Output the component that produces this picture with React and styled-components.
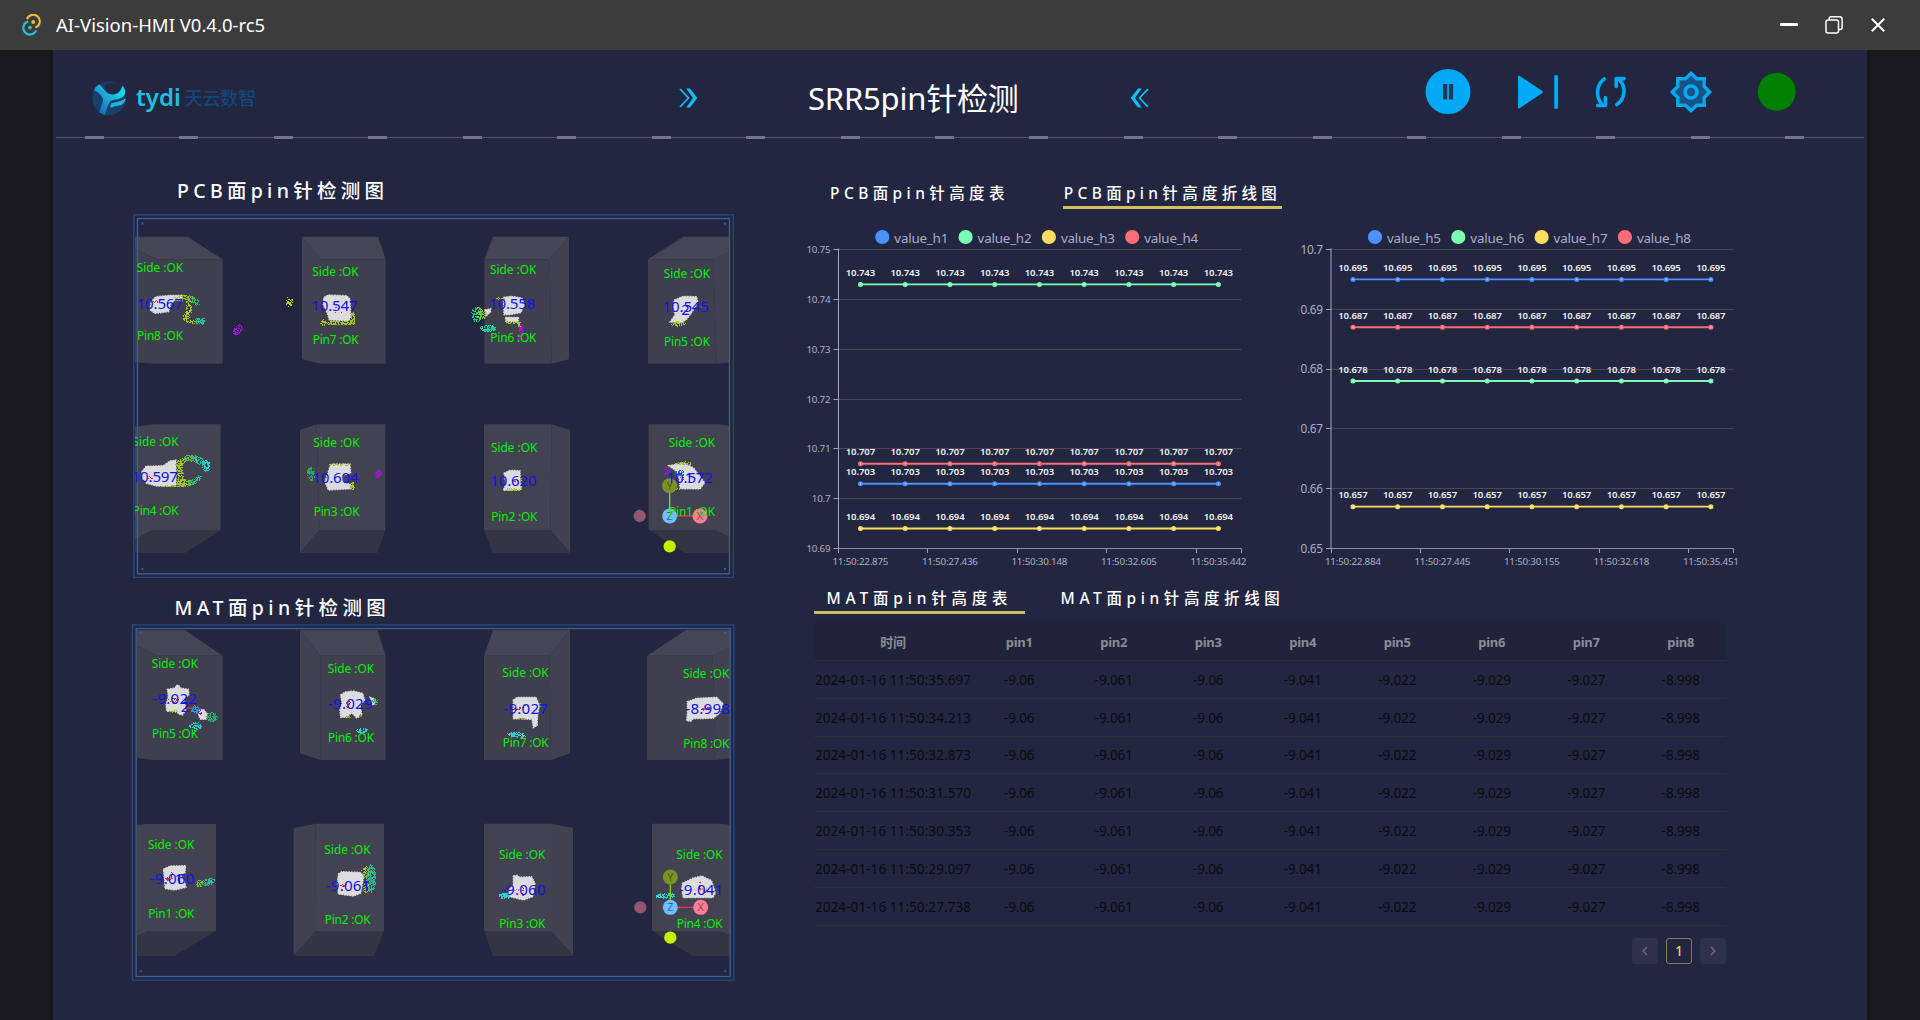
import React from "react";
import styled, { createGlobalStyle } from "styled-components";

const SANS = `"Noto Sans", "Noto Sans CJK SC", sans-serif`;

const GlobalStyle = createGlobalStyle`
  * { box-sizing: border-box; }
  body { margin: 0; background: #18171c; font-family: ${SANS}; overflow: hidden; }
  svg { display: block; flex: none; }
  svg text { font-family: ${SANS}; }
`;

/* ---------- window frame ---------- */

const Window = styled.div`
  width: 1920px;
  height: 1020px;
  display: flex;
  flex-direction: column;
`;

const TitleBar = styled.div`
  height: 50px;
  flex: none;
  display: flex;
  align-items: center;
  padding: 0 34px 0 22px;
  background: #3c3c3c;
  color: #fff;
`;

const AppName = styled.span`
  margin: 0 auto 0 14px;
  font-size: 18.5px;
  line-height: 50px;
  letter-spacing: 0;
  white-space: nowrap;
`;

const WindowButtons = styled.div`
  display: flex;
  align-items: center;
  gap: 27px;
`;

const Body = styled.div`
  flex: 1;
  display: flex;
  justify-content: center;
  background: #18171c;
`;

const Main = styled.main`
  width: 1814px;
  background: #232640;
  color: #fff;
`;

/* ---------- header ---------- */

const Header = styled.header`
  height: 86px;
  padding: 10px 0 0 39px;
  display: grid;
  grid-template-columns: 587px 129px 322px 295px auto;
  align-items: center;
`;

const Logo = styled.div`
  display: flex;
  align-items: center;
`;

const LogoLatin = styled.span`
  margin: -3px 0 0 9px;
  font-size: 24px;
  line-height: 30px;
  font-weight: 600;
  letter-spacing: 0;
  color: #22bfdc;
`;

const LogoHan = styled.span`
  margin-left: 4px;
  font-size: 18px;
  font-weight: 500;
  line-height: 30px;
  letter-spacing: -0.2px;
  color: #13477a;
`;

const PageTitle = styled.h1`
  margin: 0;
  font-size: 31px;
  font-weight: 400;
  line-height: 44px;
  letter-spacing: -0.2px;
  white-space: nowrap;
`;

const Actions = styled.div`
  display: flex;
  align-items: center;
  margin-top: -13px;
`;

const ActionButton = styled.button`
  width: 46px;
  height: 46px;
  padding: 0;
  border: 0;
  background: none;
  margin-left: ${(p) => p.$gap || 0}px;
`;

const Divider = styled.div`
  height: 3px;
  margin: 0 3px;
  background:
    repeating-linear-gradient(90deg, #757489 0 19px, transparent 19px 94.45px) 28.5px 0 / 100% 3px no-repeat,
    linear-gradient(#56566e, #56566e) 0 1px / 100% 1px no-repeat;
`;

/* ---------- content ---------- */

const Content = styled.div`
  display: flex;
  padding-left: 78px;
`;

const LeftColumn = styled.section`
  width: 667px;
`;

const RightColumn = styled.section`
  width: 945px;
`;

const PanelTitle = styled.h2`
  height: ${(p) => p.$height}px;
  margin: 0;
  padding: ${(p) => p.$top}px 0 0 ${(p) => p.$left}px;
  font-size: 19.5px;
  font-weight: 500;
  line-height: 24px;
  letter-spacing: ${(p) => p.$spacing}px;
  white-space: nowrap;
`;

const ScenePanel = styled.div`
  margin-left: ${(p) => p.$left}px;
`;

const Tabs = styled.div`
  display: flex;
  gap: 38px;
  padding: ${(p) => p.$top}px 0 0 16px;
`;

const Tab = styled.div`
  width: ${(p) => p.$width}px;
  height: 27px;
  display: flex;
  justify-content: center;
  font-size: 15.5px;
  font-weight: 500;
  line-height: 23.5px;
  letter-spacing: ${(p) => p.$spacing}px;
  white-space: nowrap;
  border-bottom: 3px solid ${(p) => (p.$active ? "#d3be60" : "transparent")};
`;

const ChartRow = styled.div`
  display: flex;
`;

const Table = styled.div`
  width: 912px;
  margin: 9px 0 0 16px;
  overflow: hidden;
`;

const Row = styled.div`
  display: grid;
  grid-template-columns: 158px repeat(8, 94.5px);
  height: 37.8px;
  border-bottom: 1px solid #2f2e3a;
  align-items: center;
  text-align: center;
  font-size: 13.6px;
  letter-spacing: -0.2px;
  white-space: nowrap;
  color: #0a0a10;
`;

const HeadRow = styled(Row)`
  height: 38px;
  background: #20233a;
  color: #8b8d96;
  font-size: 13px;
  font-weight: 700;
`;

const Cell = styled.span`
  display: block;
`;

const TimeCell = styled(Cell)`
  letter-spacing: 0.03px;
`;

const Pager = styled.div`
  display: flex;
  justify-content: flex-end;
  gap: 8px;
  margin: 12px 17px 0 0;
`;

const PageButton = styled.button`
  width: 26px;
  height: 26px;
  padding: 0;
  display: flex;
  align-items: center;
  justify-content: center;
  border: 1px solid ${(p) => (p.$active ? "#8b7d50" : "#2f304b")};
  border-radius: 3px;
  background: ${(p) => (p.$active ? "transparent" : "#2f304b")};
  color: ${(p) => (p.$active ? "#e6cc66" : "#6a6b80")};
  font: 500 14px/24px ${SANS};
`;

/* ---------- icons ---------- */

const AppIcon = () => (
  <svg width="20" height="22" viewBox="0 0 20 22" fill="none">
    <path d="M5 5.2 A6.6 6.6 0 1 1 13.4 13.6" stroke="#f5b82e" strokeWidth="2.1" />
    <path d="M6.2 7.6 A6.6 6.6 0 1 0 14 16.6" stroke="#26c3d6" strokeWidth="2.1" />
    <circle cx="11.2" cy="8" r="1.9" fill="#f5b82e" />
    <circle cx="8" cy="13.6" r="1.9" fill="#26c3d6" />
  </svg>
);

const MinimizeIcon = () => (
  <svg width="18" height="20" viewBox="0 0 18 20">
    <rect x="0" y="8" width="18" height="3" rx="1" fill="#fff" />
  </svg>
);

const RestoreIcon = () => (
  <svg width="18" height="18" viewBox="0 0 18 18" fill="none" stroke="#fff" strokeWidth="1.5">
    <rect x="1" y="4" width="12.5" height="13" rx="2" />
    <path d="M4.2 4 V2.8 a2 2 0 0 1 2-2 H14.6 a2.5 2.5 0 0 1 2.5 2.5 V11.5 a2 2 0 0 1-2 2 H13.6" />
  </svg>
);

const CloseIcon = () => (
  <svg width="16" height="16" viewBox="0 0 16 16" stroke="#fff" strokeWidth="2">
    <path d="M1.8 1.8 L14.2 14.2 M14.2 1.8 L1.8 14.2" />
  </svg>
);

const LogoMark = () => (
  <svg width="35" height="35" viewBox="0 0 35 35">
    <defs>
      <linearGradient id="mark" x1="0" y1="1" x2="1" y2="0.1">
        <stop offset="0.1" stopColor="#1467b4" />
        <stop offset="0.5" stopColor="#1fa4d6" />
        <stop offset="0.85" stopColor="#12dcec" />
      </linearGradient>
    </defs>
    <circle cx="17" cy="17.4" r="16.8" fill="#15406f" />
    <path d="M12.5 4.5 C17 0.5 26 1.5 29 6 C29 11 24 14.5 19.5 13.5 C15.5 12 13 8 12.5 4.5Z" fill="#222844" />
    <path
      d="M3.2 6.5 L7.2 3.2 C10 5.6 12.5 9.5 16 12.6 C21 15 29 13 30.2 4.4 C34 8.5 34.4 13 30.4 16.2 C26 18.6 21 18.6 18.5 20 C15.5 24 14.4 29 12.8 34 L7 31.4 C9 27 10.6 22.5 11.2 18.6 C9.4 14 6 11 2 9.6 Z"
      fill="url(#mark)"
    />
    <path d="M18.6 22.2 C23 20.4 29 20.6 33.8 16.4 C34.6 20.5 31 24.4 26.6 25.2 C23 25.6 20.6 26 18 27.6 C18 25.6 18 23.6 18.6 22.2Z" fill="#1fb4dc" stroke="#232640" strokeWidth="0.7" />
  </svg>
);

const DoubleChevron = ({ flip }) => (
  <svg width="19" height="20" viewBox="0 0 19 20" fill="none" stroke="#12bdf8">
    <g transform={flip ? "translate(19 0) scale(-1 1)" : undefined}>
      <path d="M1 1 L9.5 10 L1 19" strokeWidth="1.8" />
      <path d="M7.2 0.5 H11 L18.3 10 L11 19.5 H7.2 L14 10 Z" fill="#12bdf8" stroke="none" />
    </g>
  </svg>
);

const PauseIcon = () => (
  <svg width="46" height="46" viewBox="0 0 46 46">
    <circle cx="23" cy="22.6" r="22.5" fill="#03a9f4" />
    <rect x="18" y="15" width="4.2" height="15.4" fill="#1c3a5c" />
    <rect x="23.9" y="15" width="4.2" height="15.4" fill="#1c3a5c" />
  </svg>
);

const StepIcon = () => (
  <svg width="46" height="46" viewBox="0 0 46 46" fill="#03a9f4">
    <path d="M3 7.5 Q3 6 4.4 6.8 L27.4 22 Q28.4 23 27.4 24 L4.4 39.4 Q3 40 3 38.6 Z" />
    <rect x="39.2" y="6.2" width="3.8" height="33.5" />
  </svg>
);

const CycleIcon = () => (
  <svg width="46" height="46" viewBox="0 0 46 46" fill="none" stroke="#03a9f4" strokeWidth="3.6" strokeLinecap="round" strokeLinejoin="round">
    <path d="M16.2 10 C8.6 15.5 7.2 27 13.6 35" />
    <path d="M9.6 36.5 H17.4 V28.6" />
    <path d="M28.8 35.6 C37 30 38.6 18.6 31.6 11" />
    <path d="M36 9.6 H28.2 V17.6" />
  </svg>
);

const GearIcon = () => (
  <svg width="46" height="46" viewBox="0 0 46 46" stroke="#03a9f4" strokeWidth="3.4">
    <path
      d="M23 4.3 L28.6 9.8 H36.2 V17.4 L41.7 23 L36.2 28.6 V36.2 H28.6 L23 41.7 L17.4 36.2 H9.8 V28.6 L4.3 23 L9.8 17.4 V9.8 H17.4 Z"
      fill="#1a517f"
    />
    <circle cx="23" cy="23" r="6" fill="#1a517f" strokeWidth="3.6" />
  </svg>
);

const StatusLight = () => (
  <svg width="46" height="46" viewBox="0 0 46 46">
    <circle cx="22.7" cy="22.7" r="19" fill="#008000" />
  </svg>
);

/* ---------- point-cloud scenes (3 drawing units per pixel) ---------- */

const FACE = { top: "#454555", front: "#3f3f4e", side: "#414150", lit: "#424251", under: "#343443" };

const random = (seed) => {
  let s = seed | 0;
  return () => {
    s = (s + 0x6d2b79f5) | 0;
    let t = Math.imul(s ^ (s >>> 15), 1 | s);
    t = (t + Math.imul(t ^ (t >>> 7), 61 | t)) ^ t;
    return ((t ^ (t >>> 14)) >>> 0) / 4294967296;
  };
};

// Scattered dots inside a skewed ellipse.
const Speckle = ({ at: [cx, cy, rx, ry, n, color, tilt = 0] }) => {
  const rnd = random(Math.round(cx * 31 + cy * 17 + n));
  let d = "";
  for (let i = 0; i < n; i++) {
    const a = rnd() * Math.PI * 2;
    const r = Math.sqrt(rnd());
    const x = Math.cos(a) * r * rx;
    const y = Math.sin(a) * r * ry + x * tilt;
    d += `M${Math.round((cx + x) / 3) * 3} ${Math.round((cy + y) / 3) * 3}h3v3h-3z`;
  }
  return <path d={d} fill={color} />;
};

const LIME = "#a3c520";
const GREEN = "#38b85c";
const TEAL = "#24bfa4";
const CYAN = "#27d0d2";
const VIOLET = "#a514d8";
const RED = "#e02828";

const pcbScene = {
  view: "39 42 1803 1092",
  width: 601,
  height: 364,
  outer: [41.5, 44.5, 1799, 1088],
  inner: [52.5, 55.5, 1776, 1066],
  clip: [45, 55, 1783, 1066],
  dots: [[67, 71], [1815, 71], [67, 1107], [1815, 1107]],
  faces: [
    ["top", "45,110 203,110 308,178 112,178 45,147"],
    ["front", "45,147 112,178 308,178 308,491 100,491 45,487"],
    ["top", "546,110 774,110 797,178 600,178"],
    ["side", "546,110 600,178 600,491 546,478"],
    ["front", "600,178 797,178 797,491 600,491"],
    ["top", "1119,110 1347,110 1289,178 1093,178"],
    ["front", "1093,178 1289,178 1295,491 1093,491"],
    ["side", "1289,178 1347,110 1347,478 1295,491"],
    ["top", "1690,110 1830,110 1830,155 1780,178 1584,178"],
    ["front", "1584,178 1780,178 1790,491 1584,491"],
    ["side", "1780,178 1830,155 1830,488 1790,491"],
    ["lit", "45,680 100,673 302,673 302,990 100,990 45,1018"],
    ["under", "100,990 302,990 195,1059 45,1059 45,1018"],
    ["side", "540,690 590,673 598,990 540,1059"],
    ["lit", "590,673 796,673 796,990 598,990"],
    ["under", "598,990 796,990 772,1059 540,1059"],
    ["lit", "1092,673 1295,673 1291,990 1092,990"],
    ["side", "1295,673 1350,690 1350,1059 1291,990"],
    ["under", "1092,990 1291,990 1350,1059 1119,1059"],
    ["lit", "1586,673 1800,673 1830,679 1830,1012 1785,990 1586,990"],
    ["under", "1586,990 1785,990 1830,1012 1830,1059 1696,1059"],
  ],
  blobs: [
    "98,300 108,290 150,286 186,286 186,302 165,300 152,312 146,335 105,340 90,330 92,312",
    "612,292 625,285 680,287 690,297 692,350 686,362 628,360 622,340 609,312",
    "1150,292 1175,289 1205,294 1214,315 1202,338 1170,344 1152,344",
    "1156,352 1196,352 1194,366 1158,364",
    "1095,330 1112,326 1112,336 1100,346",
    "1663,300 1690,289 1730,290 1733,308 1720,330 1700,358 1685,368 1650,366 1665,345 1660,320",
    "66,815 78,799 130,797 150,783 168,780 168,858 110,858 80,850 66,835",
    "625,815 632,793 690,792 692,820 668,826 672,850 690,852 696,866 625,870 615,845",
    "1152,820 1170,811 1200,812 1202,868 1150,871 1158,850",
    "1646,797 1690,789 1720,803 1754,848 1740,867 1680,866 1678,835 1665,810",
  ],
  clouds: [
    [190, 291, 28, 6, 60, LIME], [218, 300, 20, 12, 55, GREEN, 0.4], [205, 320, 10, 22, 60, LIME],
    [197, 350, 10, 14, 50, LIME], [215, 364, 18, 5, 32, LIME], [239, 362, 15, 11, 60, TEAL],
    [506, 305, 10, 15, 36, "#c6cc18"], [352, 388, 15, 14, 70, VIOLET, -0.5],
    [607, 366, 9, 9, 24, LIME], [655, 368, 48, 6, 100, LIME], [697, 355, 8, 18, 55, LIME],
    [1070, 342, 18, 22, 130, "#12cf7c"], [1083, 342, 14, 14, 50, LIME], [1103, 384, 23, 10, 110, "#18cfa0"],
    [1140, 294, 14, 4, 20, LIME], [1177, 367, 22, 4, 30, LIME], [1196, 372, 5, 9, 20, LIME],
    [1201, 385, 6, 14, 38, VIOLET], [1196, 410, 6, 10, 30, VIOLET],
    [1673, 370, 22, 7, 60, LIME], [1735, 320, 10, 3, 6, RED],
    [178, 815, 11, 38, 130, LIME], [182, 785, 18, 10, 60, LIME, -0.4], [210, 773, 20, 10, 80, "#5cbc48"],
    [235, 780, 20, 12, 70, TEAL, 0.4], [258, 797, 12, 18, 70, CYAN], [190, 848, 24, 11, 100, LIME],
    [215, 846, 16, 9, 60, GREEN, -0.5], [234, 834, 10, 8, 28, TEAL, -0.6], [150, 857, 30, 2, 24, LIME],
    [572, 821, 12, 20, 100, "#22a95c"], [774, 820, 9, 11, 90, "#8c1fd0", -0.3],
    [660, 792, 34, 4, 30, LIME], [696, 857, 6, 12, 30, LIME],
    [1178, 868, 24, 4, 26, LIME], [1202, 850, 3, 20, 14, LIME],
    [1638, 811, 8, 13, 44, "#7a1fc0"], [1677, 818, 14, 10, 40, "#1c6fd0"], [1690, 789, 24, 5, 30, LIME], [1655, 866, 26, 3, 26, LIME],
    [105, 304, 8, 5, 7, RED], [90, 832, 8, 5, 6, RED], [655, 320, 20, 22, 6, RED], [1184, 845, 8, 8, 4, RED], [1685, 832, 5, 10, 9, RED],
  ],
  gizmo: [1649, 948],
  labels: [
    [51, 216, 420, "Pin8", 50, 328, "10.567"],
    [578, 228, 432, "Pin7", 574, 332, "10.547"],
    [1111, 222, 426, "Pin6", 1107, 327, "10.558"],
    [1632, 234, 438, "Pin5", 1628, 336, "10.545"],
    [38, 738, 945, "Pin4", 35, 846, "10.597"],
    [581, 741, 948, "Pin3", 577, 849, "10.604"],
    [1114, 756, 963, "Pin2", 1111, 858, "10.620"],
    [1647, 741, 948, "Pin1", 1640, 850, "10.572"],
  ],
  marks: [[1684, 345, "2"], [1694, 850, "1"]],
};

const matScene = {
  view: "33 72 1812 1071",
  width: 604,
  height: 357,
  outer: [37.5, 74.5, 1804, 1066],
  inner: [48.5, 85.5, 1782, 1044],
  clip: [51, 90, 1781, 1038],
  dots: [[62, 99], [1816, 99], [62, 1114], [1816, 1114]],
  faces: [
    ["top", "51,90 194,90 308,167 112,167 51,138"],
    ["front", "51,138 112,167 308,167 308,480 100,480 51,474"],
    ["top", "540,90 772,90 797,167 601,167"],
    ["side", "540,90 601,167 601,480 540,460"],
    ["front", "601,167 797,167 797,480 601,480"],
    ["top", "1119,90 1350,90 1289,167 1092,167"],
    ["front", "1092,167 1289,167 1293,480 1092,480"],
    ["side", "1289,167 1350,90 1350,460 1293,480"],
    ["top", "1698,90 1832,90 1832,141 1778,167 1581,167"],
    ["front", "1581,167 1778,167 1788,480 1581,480"],
    ["side", "1778,167 1832,141 1832,474 1788,480"],
    ["lit", "51,675 80,672 288,672 288,993 85,993 51,1008"],
    ["under", "85,993 288,993 163,1068 51,1068 51,1008"],
    ["side", "521,684 587,671 588,993 521,1068"],
    ["lit", "587,671 792,671 792,993 588,993"],
    ["under", "588,993 792,993 762,1068 521,1068"],
    ["lit", "1092,671 1293,671 1293,993 1092,993"],
    ["side", "1293,671 1359,684 1359,1068 1293,993"],
    ["under", "1092,993 1293,993 1359,1068 1119,1068"],
    ["lit", "1596,671 1805,671 1832,675 1832,1008 1798,993 1596,993"],
    ["under", "1596,993 1798,993 1832,1008 1832,1068 1718,1068"],
  ],
  blobs: [
    "142,268 165,264 170,256 177,256 180,264 205,268 207,285 192,295 198,330 187,345 176,342 170,334 140,334 138,315 145,290",
    "235,332 250,328 262,342 258,358 242,358 236,348",
    "662,285 675,276 700,273 728,280 734,300 720,315 726,345 710,354 695,338 680,352 662,352 660,330 666,310",
    "750,292 764,296 768,306 758,316",
    "1180,300 1192,292 1248,292 1258,315 1252,355 1252,376 1240,383 1236,358 1180,356",
    "1702,305 1730,295 1790,292 1810,312 1798,340 1780,355 1720,356 1713,364 1700,362 1702,340",
    "130,808 150,798 197,797 195,818 180,828 190,835 198,862 165,870 135,866 134,840",
    "655,822 665,815 720,817 732,826 722,880 700,888 655,882 652,850",
    "1180,828 1192,826 1198,832 1235,830 1245,850 1238,890 1210,900 1170,890 1166,870 1180,855",
    "1687,850 1720,834 1745,828 1775,842 1786,880 1778,893 1690,893 1685,870",
  ],
  clouds: [
    [225, 327, 14, 12, 70, "#1f9ad0"], [238, 333, 5, 12, 16, VIOLET], [274, 350, 17, 14, 90, "#26b070"], [225, 377, 18, 12, 60, CYAN],
    [160, 298, 16, 8, 26, RED], [205, 322, 12, 4, 16, RED], [160, 333, 14, 3, 10, LIME],
    [764, 304, 8, 10, 26, "#3cc45c"], [725, 391, 19, 7, 60, CYAN], [684, 312, 12, 10, 16, RED], [683, 350, 7, 4, 12, "#9a9628"], [720, 345, 5, 5, 9, "#9a9628"],
    [1190, 403, 28, 8, 90, CYAN, 0.1], [1206, 321, 22, 3, 18, RED, -0.3], [1205, 355, 10, 3, 10, "#9a9628"], [1259, 318, 3, 8, 10, GREEN],
    [1757, 325, 18, 4, 26, RED, -0.1],
    [238, 850, 12, 10, 38, "#86b830"], [263, 845, 19, 12, 80, TEAL, -0.3], [145, 836, 14, 5, 22, RED], [154, 825, 2, 12, 8, RED],
    [735, 815, 13, 16, 55, LIME], [752, 834, 14, 42, 260, "#26b88c"], [737, 862, 9, 16, 36, LIME], [670, 855, 12, 4, 16, RED],
    [1153, 886, 17, 9, 100, CYAN], [1196, 868, 28, 3, 16, "#e08080"], [1207, 868, 2, 20, 12, RED],
    [1636, 886, 30, 8, 110, CYAN], [1745, 868, 26, 3, 16, "#e08080"], [1755, 872, 8, 5, 12, RED], [1738, 855, 2, 14, 8, RED],
  ],
  gizmo: [1651, 922],
  labels: [
    [96, 204, 414, "Pin5", 97, 313, "-9.022"],
    [624, 219, 426, "Pin6", 624, 328, "-9.029"],
    [1148, 231, 441, "Pin7", 1150, 343, "-9.027"],
    [1690, 234, 444, "Pin8", 1696, 342, "-8.998"],
    [85, 747, 954, "Pin1", 89, 852, "-9.060"],
    [614, 762, 972, "Pin2", 617, 874, "-9.061"],
    [1138, 777, 984, "Pin3", 1143, 886, "-9.060"],
    [1670, 777, 984, "Pin4", 1676, 886, "-9.041"],
  ],
  marks: [[182, 337, "2"], [164, 852, "1"]],
};

const Axis = ({ cx, cy }) => (
  <g>
    <path d={`M${cx} ${cy}V${cy - 91}`} stroke="#86d80c" strokeWidth="4" />
    <path d={`M${cx} ${cy}H${cx + 91}`} stroke="#f0304e" strokeWidth="4" />
    <circle cx={cx - 90} cy={cy} r="18.5" fill="#92566f" />
    <circle cx={cx} cy={cy + 91} r="18.5" fill="#c3f000" />
    <circle cx={cx} cy={cy - 91} r="22.5" fill="#7d9126" />
    <circle cx={cx + 91} cy={cy} r="22.5" fill="#ff7d96" />
    <circle cx={cx} cy={cy} r="22.5" fill="#70c0ff" />
    <g fontSize="33" textAnchor="middle" fillOpacity="0.65">
      <text x={cx} y={cy - 79} fill="#2c3a08">Y</text>
      <text x={cx + 91} y={cy + 12} fill="#5c1a30">X</text>
      <text x={cx} y={cy + 12} fill="#123458">Z</text>
    </g>
  </g>
);

const Scene = ({ id, scene }) => {
  const box = ([x, y, width, height]) => ({ x, y, width, height });
  return (
    <svg width={scene.width} height={scene.height} viewBox={scene.view}>
      <clipPath id={id}>
        <rect {...box(scene.clip)} />
      </clipPath>
      <g clipPath={`url(#${id})`}>
        {scene.faces.map(([kind, points]) => (
          <polygon key={points} points={points} fill={FACE[kind]} />
        ))}
        {scene.blobs.map((points) => (
          <polygon key={points} points={points} fill="#dcdcdf" stroke="#dcdcdf" strokeWidth="4" strokeDasharray="5 3" />
        ))}
        {scene.clouds.map((c) => (
          <Speckle key={c.join()} at={c} />
        ))}
      </g>
      <rect {...box(scene.outer)} fill="none" stroke="#28477f" strokeWidth="4" />
      <rect {...box(scene.inner)} fill="none" stroke="#3a5f9a" strokeWidth="4" />
      {scene.dots.map(([x, y]) => (
        <circle key={`${x},${y}`} cx={x} cy={y} r="3.4" fill="#2c62ac" />
      ))}
      <Axis cx={scene.gizmo[0]} cy={scene.gizmo[1]} />
      <g clipPath={`url(#${id})`}>
        {scene.labels.map(([x, sideY, pinY, pin, valueX, valueY, value]) => (
          <g key={pin}>
            <text x={valueX} y={valueY} fontSize="45.5" textLength={value[0] === "-" ? 134 : 139} fill="#1111ee">
              {value}
            </text>
            <g fontSize="35.5" fill="#06f006">
              <text x={x - 1} y={sideY} textLength="139">Side :OK</text>
              <text x={x} y={pinY} textLength="138">{`${pin} :OK`}</text>
            </g>
          </g>
        ))}
        {scene.marks.map(([x, y, n]) => (
          <text key={x} x={x} y={y} fontSize="44" fill="#1111ee">{n}</text>
        ))}
      </g>
    </svg>
  );
};

/* ---------- line charts ---------- */

const SERIES_COLORS = ["#4992ff", "#7cffb2", "#fddd60", "#ff6e76"];
const TOP = 249.5;
const BOTTOM = 548.5;
const STEP = 44.74;

const LineChart = ({ view, width, axisX, legendX, min, max, ticks, tickSize, tickWidth, names, values, times, children }) => {
  const [vx] = view;
  const right = axisX + STEP * 9;
  const yOf = (v) => BOTTOM - ((v - min) / (max - min)) * (BOTTOM - TOP);
  const points = Array.from({ length: 9 }, (_, i) => axisX - 0.4 + STEP * (i + 0.5));
  return (
    <svg width={width} height="378" viewBox={`${vx} 209 ${width} 378`}>
      {names.map((name, i) => (
        <g key={name}>
          <circle cx={legendX + i * 83.3} cy="237" r="7.1" fill={SERIES_COLORS[i]} />
          <text x={legendX + i * 83.3 + 12} y="243" fontSize="13.4" textLength="54" fill="#aeadc4">{name}</text>
        </g>
      ))}
      {ticks.map((label, i) => {
        const y = BOTTOM - ((BOTTOM - TOP) * i) / (ticks.length - 1);
        const py = Math.round(y - 0.5) + 0.5;
        return (
          <g key={label}>
            {i > 0 && <path d={`M${axisX} ${py}H${right}`} stroke="#484753" />}
            <path d={`M${axisX - 5} ${py}H${axisX}`} stroke="#a09fb5" />
            <text x={axisX - 8} y={y + tickSize * 0.36} fontSize={tickSize} textAnchor="end" textLength={label.length * tickWidth - tickWidth / 2} fill="#aeadc4">
              {label}
            </text>
          </g>
        );
      })}
      <path d={`M${axisX} ${TOP - 1}V${BOTTOM}`} stroke="#a5a4ba" />
      <path d={`M${axisX} ${BOTTOM}H${right}`} stroke="#8d8ca4" />
      {[0, 2, 4, 6, 8, 9].map((n) => (
        <path key={n} d={`M${Math.round(axisX - 0.5 + STEP * n) + 0.5} ${BOTTOM}v4.5`} stroke="#a09fb5" />
      ))}
      {times.map((t, i) => (
        <text key={t} x={points[i * 2]} y="565" fontSize="9.8" textAnchor="middle" textLength="56" fill="#aeadc4">{t}</text>
      ))}
      {values.map((v, s) => (
        <g key={v}>
          <path d={`M${points[0]} ${yOf(v)}H${points[8]}`} stroke={SERIES_COLORS[s]} strokeWidth="1.9" />
          {points.map((x) => (
            <g key={x}>
              <circle cx={x} cy={yOf(v)} r="2.5" fill={SERIES_COLORS[s]} />
              <circle cx={x} cy={yOf(v)} r="0.7" fill="#fff" fillOpacity="0.7" />
              <text x={x} y={yOf(v) - 8.4} fontSize="9.6" fontWeight="600" textAnchor="middle" textLength="29.4" fill="#f2f2f2">
                {v.toFixed(3)}
              </text>
            </g>
          ))}
        </g>
      ))}
      {children}
    </svg>
  );
};

/* ---------- data ---------- */

const columns = ["时间", "pin1", "pin2", "pin3", "pin4", "pin5", "pin6", "pin7", "pin8"];
const readings = ["-9.06", "-9.061", "-9.06", "-9.041", "-9.022", "-9.029", "-9.027", "-8.998"];
const timestamps = ["35.697", "34.213", "32.873", "31.570", "30.353", "29.097", "27.738"].map((s) => `2024-01-16 11:50:${s}`);

export default function App() {
  return (
    <Window>
      <GlobalStyle />
      <TitleBar>
        <AppIcon />
        <AppName>AI-Vision-HMI V0.4.0-rc5</AppName>
        <WindowButtons>
          <MinimizeIcon />
          <RestoreIcon />
          <CloseIcon />
        </WindowButtons>
      </TitleBar>
      <Body>
        <Main>
          <Header>
            <Logo>
              <LogoMark />
              <LogoLatin>tydi</LogoLatin>
              <LogoHan>天云数智</LogoHan>
            </Logo>
            <DoubleChevron />
            <PageTitle>SRR5pin针检测</PageTitle>
            <DoubleChevron flip />
            <Actions>
              <ActionButton><PauseIcon /></ActionButton>
              <ActionButton $gap={44}><StepIcon /></ActionButton>
              <ActionButton $gap={27}><CycleIcon /></ActionButton>
              <ActionButton $gap={34}><GearIcon /></ActionButton>
              <ActionButton $gap={40}><StatusLight /></ActionButton>
            </Actions>
          </Header>
          <Divider />
          <Content>
            <LeftColumn>
              <PanelTitle $height={75} $top={40} $left={46} $spacing={4.3}>PCB面pin针检测图</PanelTitle>
              <ScenePanel $left={2}>
                <Scene id="pcb" scene={pcbScene} />
              </ScenePanel>
              <PanelTitle $height={46} $top={17.5} $left={43.5} $spacing={4.4}>MAT面pin针检测图</PanelTitle>
              <ScenePanel $left={0}>
                <Scene id="mat" scene={matScene} />
              </ScenePanel>
            </LeftColumn>
            <RightColumn>
              <Tabs $top={43}>
                <Tab $width={211} $spacing={4.4}>PCB面pin针高度表</Tab>
                <Tab $width={219} $spacing={4.3} $active>PCB面pin针高度折线图</Tab>
              </Tabs>
              <ChartRow>
                <LineChart
                  view={[798]}
                  width={500}
                  axisX={838.5}
                  legendX={882.3}
                  min={10.69}
                  max={10.75}
                  ticks={["10.69", "10.7", "10.71", "10.72", "10.73", "10.74", "10.75"]}
                  tickSize={9.8}
                  tickWidth={5.35}
                  names={["value_h1", "value_h2", "value_h3", "value_h4"]}
                  values={[10.703, 10.743, 10.694, 10.707]}
                  times={["11:50:22.875", "11:50:27.436", "11:50:30.148", "11:50:32.605", "11:50:35.442"]}
                />
                <LineChart
                  view={[1298]}
                  width={441}
                  axisX={1331}
                  legendX={1375}
                  min={10.65}
                  max={10.7}
                  ticks={["0.65", "0.66", "0.67", "0.68", "0.69", "10.7"]}
                  tickSize={11.8}
                  tickWidth={6.4}
                  names={["value_h5", "value_h6", "value_h7", "value_h8"]}
                  values={[10.695, 10.678, 10.657, 10.687]}
                  times={["11:50:22.884", "11:50:27.445", "11:50:30.155", "11:50:32.618", "11:50:35.451"]}
                >
                  {[1, 2, 3, 4, 5].map((n) => (
                    <rect key={n} x="1298" y={TOP + n * 59.8 - 4} width="1" height="8" fill="#34354f" />
                  ))}
                </LineChart>
              </ChartRow>
              <Tabs $top={0}>
                <Tab $width={211} $spacing={4.8} $active>MAT面pin针高度表</Tab>
                <Tab $width={219} $spacing={4.6}>MAT面pin针高度折线图</Tab>
              </Tabs>
              <Table>
                <HeadRow>
                  {columns.map((c) => <Cell key={c}>{c}</Cell>)}
                </HeadRow>
                {timestamps.map((t) => (
                  <Row key={t}>
                    <TimeCell>{t}</TimeCell>
                    {readings.map((r, i) => <Cell key={i}>{r}</Cell>)}
                  </Row>
                ))}
              </Table>
              <Pager>
                <PageButton>
                  <svg width="6" height="10" viewBox="0 0 6 10" fill="none" stroke="currentColor" strokeWidth="1.5"><path d="M5 1 L1.2 5 L5 9" /></svg>
                </PageButton>
                <PageButton $active>1</PageButton>
                <PageButton>
                  <svg width="6" height="10" viewBox="0 0 6 10" fill="none" stroke="currentColor" strokeWidth="1.5"><path d="M1 1 L4.8 5 L1 9" /></svg>
                </PageButton>
              </Pager>
            </RightColumn>
          </Content>
        </Main>
      </Body>
    </Window>
  );
}
